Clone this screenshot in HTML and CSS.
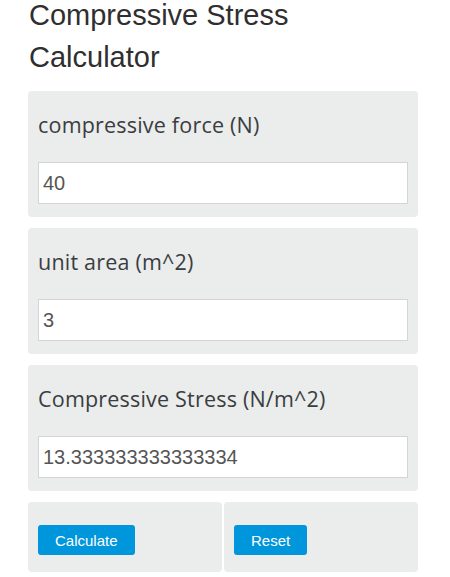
FILE: index.html
```html
<!DOCTYPE html>
<html lang="en">
<head>
  <meta charset="UTF-8" />
  <title>Compressive Stress Calculator</title>
  <link rel="stylesheet" href="styles.css">
</head>
<body>
  <div class="calc">
    <h1>Compressive Stress Calculator</h1>

    <div class="field">
      <label for="force">compressive force (N)</label>
      <input type="text" id="force" value="40">
    </div>

    <div class="field">
      <label for="area">unit area (m^2)</label>
      <input type="text" id="area" value="3">
    </div>

    <div class="field">
      <label for="stress">Compressive Stress (N/m^2)</label>
      <input type="text" id="stress" value="13.333333333333334">
    </div>

    <div class="actions">
      <div class="cell"><button onclick="calculate()">Calculate</button></div>
      <div class="cell"><button onclick="reset()">Reset</button></div>
    </div>
  </div>

  <script>
    function calculate() {
      const f = parseFloat(document.getElementById("force").value);
      const a = parseFloat(document.getElementById("area").value);
      if (!isNaN(f) && !isNaN(a) && a !== 0) {
        document.getElementById("stress").value = f / a;
      }
    }

    function reset() {
      document.getElementById("force").value = "";
      document.getElementById("area").value = "";
      document.getElementById("stress").value = "";
    }
  </script>
</body>
</html>
```

FILE: styles.css
```css
:root {
  --box-bg: #ebecec;
  --text: #333;
  --accent: #0096db;
}

body {
  margin: 0;
  background: #fff;
  color: var(--text);
  font-family: 'Liberation Sans', Arial, sans-serif;
}

.calc {
  width: 390px;
  padding-left: 28px;
}

h1 {
  margin: -6px 0 13px 1px;
  font-size: 29px;
  font-weight: normal;
  line-height: 42px;
  color: #2f2f2f;
}

.field {
  background: var(--box-bg);
  border-radius: 4px;
  padding: 10px 10px 13px;
  margin-bottom: 11px;
}

.field label {
  display: block;
  font-family: 'Open Sans', sans-serif;
  font-size: 21.5px;
  letter-spacing: 0.2px;
  line-height: 30px;
  margin: 9px 0 22px;
  color: #3a3d40;
}

.field input {
  display: block;
  box-sizing: border-box;
  width: 100%;
  height: 42px;
  padding: 0 4px;
  border: 1px solid #d4d4d4;
  background: #fff;
  font-family: 'Liberation Sans', Arial, sans-serif;
  font-size: 20px;
  color: #555;
  outline: none;
}

.actions {
  display: flex;
  gap: 2px;
}

.cell {
  flex: 1;
  background: var(--box-bg);
  border-radius: 4px;
  padding: 23px 10px 17px;
}

.cell button {
  height: 30px;
  padding: 0 17px;
  border: none;
  border-radius: 3px;
  background: var(--accent);
  color: #fff;
  font-family: 'Liberation Sans', Arial, sans-serif;
  font-size: 15px;
  cursor: pointer;
}
```
